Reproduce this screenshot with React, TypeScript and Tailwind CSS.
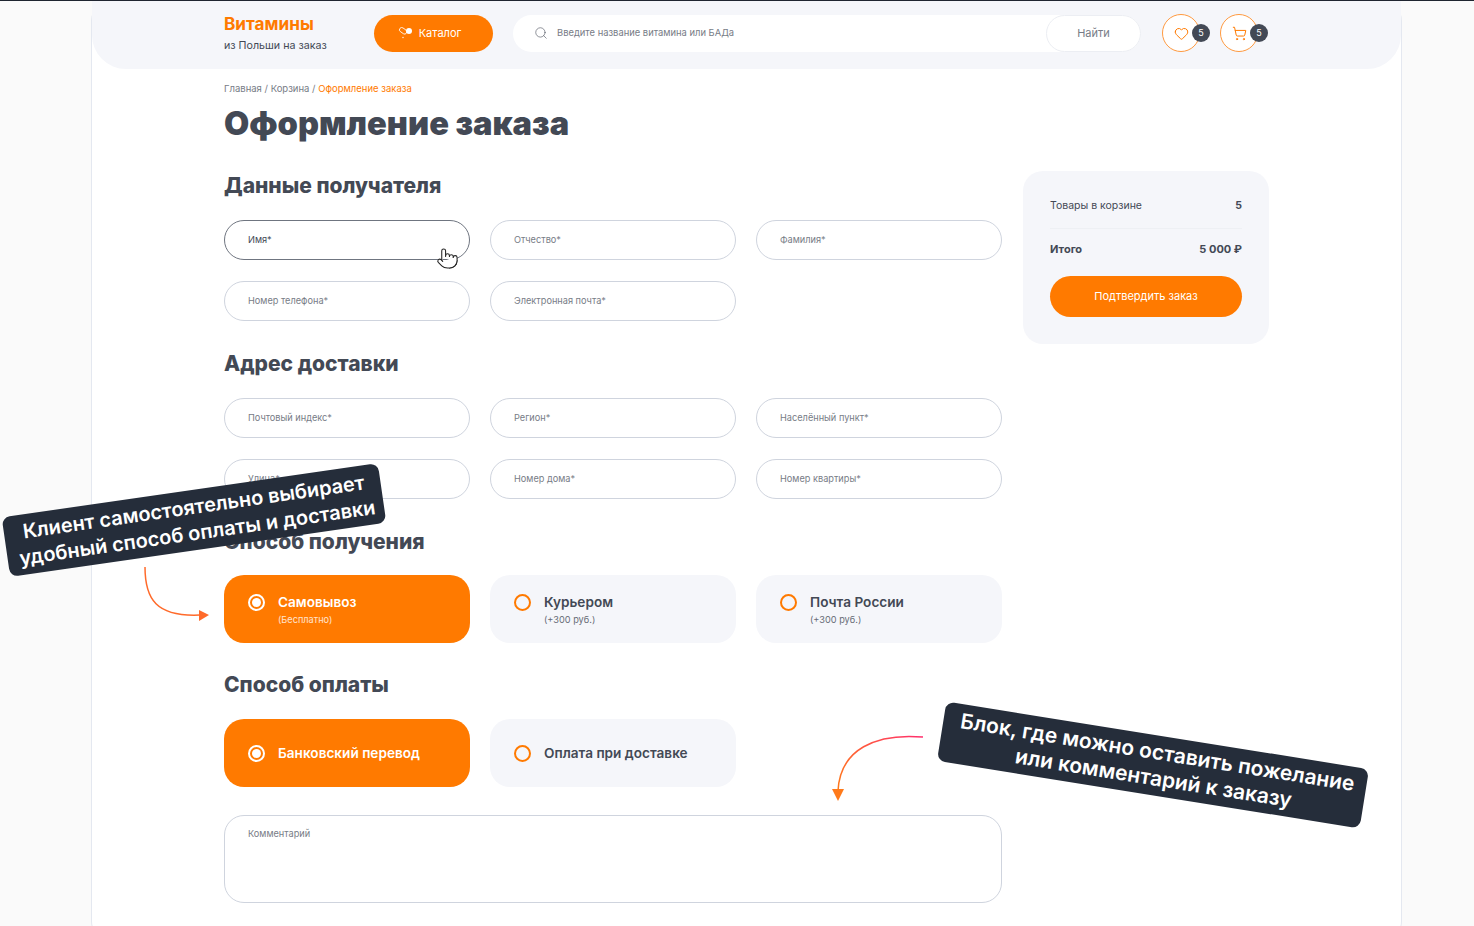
import { Heart, Pointer, Search, ShoppingCart } from "lucide-react";

const font = { fontFamily: "Inter, 'Noto Sans', sans-serif" };

function Field({ label, active }: { label: string; active?: boolean }) {
  return (
    <div
      className={
        "flex h-[40px] items-center rounded-full border bg-white pl-[23px] text-[9.2px] " +
        (active ? "border-[#6f7580] text-[#434955]" : "border-[#cfd4de] text-[#777c86]")
      }
    >
      {label}
    </div>
  );
}

function Heading({ children }: { children: string }) {
  return <h2 className="text-[21px] font-extrabold leading-[28px] text-[#434955]">{children}</h2>;
}

function Radio({ checked }: { checked?: boolean }) {
  return (
    <span
      className={
        "flex h-[17px] w-[17px] shrink-0 items-center justify-center rounded-full border-2 " +
        (checked ? "border-white" : "border-[#ff7a00]")
      }
    >
      {checked && <span className="h-[9px] w-[9px] rounded-full bg-white" />}
    </span>
  );
}

function Option({ title, note, checked }: { title: string; note?: string; checked?: boolean }) {
  return (
    <div
      className={
        "flex h-[68px] items-center gap-[13px] rounded-[20px] pl-[24px] " +
        (checked ? "bg-[#ff7a00] text-white" : "bg-[#f5f6fa] text-[#434955]")
      }
    >
      <span className={note ? "-mt-[14px]" : ""}>
        <Radio checked={checked} />
      </span>
      <div className={note ? "pt-[2px]" : ""}>
        <div className="text-[13.6px] font-semibold leading-[18px]">{title}</div>
        {note && <div className="mt-[2px] text-[9.2px] leading-[14px] opacity-80">{note}</div>}
      </div>
    </div>
  );
}

function Counter({ children }: { children: React.ReactNode }) {
  return (
    <div className="relative flex h-[38px] w-[38px] items-center justify-center rounded-full border border-[#ff9a40] bg-white text-[#ff7a00]">
      {children}
      <span className="absolute -right-[11px] top-[9px] flex h-[18px] w-[18px] items-center justify-center rounded-full bg-[#434955] text-[9px] text-white">
        5
      </span>
    </div>
  );
}

function Header() {
  return (
    <header className="flex h-[68px] items-center rounded-b-[34px] bg-[#f5f6fa] pb-[4px] pl-[132px]">
      <div className="w-[150px]">
        <div className="text-[17.2px] font-bold leading-[20px] text-[#ff7a00]">Витамины</div>
        <div className="mt-[5px] text-[10.7px] leading-[14px] text-[#434955]">из Польши на заказ</div>
      </div>
      <button className="flex h-[37px] w-[119px] items-center justify-center gap-[6px] rounded-full bg-[#ff7a00] pr-[8px] text-[11px] text-white">
        <svg width="15" height="12" viewBox="0 0 15 12" fill="none">
          <rect x="1" y="1.5" width="8" height="4.5" rx="2.2" transform="rotate(35 5 4)" stroke="white" strokeWidth="0.8" />
          <circle cx="11" cy="4" r="3" fill="white" />
          <circle cx="5" cy="10.5" r="0.7" fill="white" />
        </svg>
        Каталог
      </button>
      <div className="ml-[20px] flex h-[37px] w-[628px] items-center rounded-full bg-white pl-[21px]">
        <Search size={14} strokeWidth={1} className="text-[#434955]" />
        <span className="ml-[9px] flex-1 text-[9.4px] text-[#777c86]">Введите название витамина или БАДа</span>
        <button className="h-[37px] w-[95px] rounded-full border border-[#eceef3] bg-white text-[11px] text-[#777c86]">Найти</button>
      </div>
      <div className="ml-[21px] flex gap-[20px]">
        <Counter>
          <Heart size={15} strokeWidth={1.6} />
        </Counter>
        <Counter>
          <ShoppingCart size={15} strokeWidth={1.6} />
        </Counter>
      </div>
    </header>
  );
}

function Summary() {
  return (
    <aside className="-mt-[1px] h-[173px] w-[246px] rounded-[20px] bg-[#f5f6fa] px-[27px] pt-[26px]">
      <div className="flex items-center justify-between border-b border-[#eef0f4] pb-[13px] text-[10.5px] leading-[18px] text-[#434955]">
        <span>Товары в корзине</span>
        <span className="font-bold">5</span>
      </div>
      <div className="mt-[11px] flex items-center justify-between text-[11px] font-bold leading-[18px] text-[#434955]">
        <span>Итого</span>
        <span>5 000 ₽</span>
      </div>
      <button className="mt-[18px] h-[41px] w-full rounded-full bg-[#ff7a00] text-[11px] text-white">Подтвердить заказ</button>
    </aside>
  );
}

export default function App() {
  return (
    <div style={font} className="relative h-[926px] w-[1474px] overflow-hidden border-t border-[#1f2530] bg-[#fafafa]">
      <div className="ml-[91px] h-[940px] w-[1311px] rounded-[20px] border-x border-[#e4e8f0] bg-white">
        <Header />
        <main className="pl-[132px]">
          <nav className="mt-[14px] text-[9.5px] leading-[12px] text-[#777c86]">
            Главная / Корзина / <span className="text-[#ff7a00]">Оформление заказа</span>
          </nav>
          <h1 className="mt-[6px] text-[32.6px] font-black leading-[44px] text-[#434955]">Оформление заказа</h1>
          <div className="mt-[27px] flex gap-[21px]">
            <div className="w-[778px]">
              <Heading>Данные получателя</Heading>
              <div className="mt-[20px] grid grid-cols-3 gap-x-[20px] gap-y-[21px]">
                <Field label="Имя*" active />
                <Field label="Отчество*" />
                <Field label="Фамилия*" />
                <Field label="Номер телефона*" />
                <Field label="Электронная почта*" />
              </div>
              <div className="mt-[29px]">
                <Heading>Адрес доставки</Heading>
              </div>
              <div className="mt-[20px] grid grid-cols-3 gap-x-[20px] gap-y-[21px]">
                <Field label="Почтовый индекс*" />
                <Field label="Регион*" />
                <Field label="Населённый пункт*" />
                <Field label="Улица*" />
                <Field label="Номер дома*" />
                <Field label="Номер квартиры*" />
              </div>
              <div className="mt-[29px]">
                <Heading>Способ получения</Heading>
              </div>
              <div className="mt-[19px] grid grid-cols-3 gap-x-[20px]">
                <Option title="Самовывоз" note="(Бесплатно)" checked />
                <Option title="Курьером" note="(+300 руб.)" />
                <Option title="Почта России" note="(+300 руб.)" />
              </div>
              <div className="mt-[28px]">
                <Heading>Способ оплаты</Heading>
              </div>
              <div className="mt-[20px] grid grid-cols-3 gap-x-[20px]">
                <Option title="Банковский перевод" checked />
                <Option title="Оплата при доставке" />
              </div>
              <div className="mt-[28px] h-[88px] rounded-[20px] border border-[#cfd4de] pl-[23px] pt-[11px] text-[9.2px] leading-[14px] text-[#777c86]">
                Комментарий
              </div>
            </div>
            <Summary />
          </div>
        </main>
      </div>

      <Pointer size={23} strokeWidth={1.1} className="absolute left-[436px] top-[246px] fill-white text-[#222]" />

      <div className="absolute left-[4px] top-[489px] flex h-[60px] w-[380px] -rotate-[8.2deg] items-center justify-center rounded-[8px] bg-[#252d3a] pl-[3px] text-center text-[20px] font-semibold leading-[26px] text-white">
        <span>
          Клиент самостоятельно выбирает
          <br />
          удобный способ оплаты и доставки
        </span>
      </div>
      <div className="absolute left-[939px] top-[734px] flex h-[60px] w-[428px] rotate-[9.1deg] items-center justify-center rounded-[8px] bg-[#252d3a] pl-[5px] text-center text-[21px] font-semibold leading-[26px] text-white">
        <span>
          Блок, где можно оставить пожелание
          <br />
          или комментарий к заказу
        </span>
      </div>

      <svg className="absolute left-[140px] top-[560px]" width="75" height="70" viewBox="0 0 75 70" fill="none">
        <path d="M5 6 C5 38 16 56 60 54" stroke="#ff6a2a" strokeWidth="1.5" />
        <path d="M59 49 L69 54 L59 60 Z" fill="#ff6a2a" />
      </svg>
      <svg className="absolute left-[828px] top-[728px]" width="100" height="76" viewBox="0 0 100 76" fill="none">
        <defs>
          <linearGradient id="curve" x1="95" y1="8" x2="10" y2="62" gradientUnits="userSpaceOnUse">
            <stop stopColor="#ff2f6d" />
            <stop offset="1" stopColor="#ff7a1a" />
          </linearGradient>
        </defs>
        <path d="M95 8 C48 4 12 20 10 62" stroke="url(#curve)" strokeWidth="1.5" />
        <path d="M4 60 L16 60 L10 72 Z" fill="#ff7a1a" />
      </svg>
    </div>
  );
}
